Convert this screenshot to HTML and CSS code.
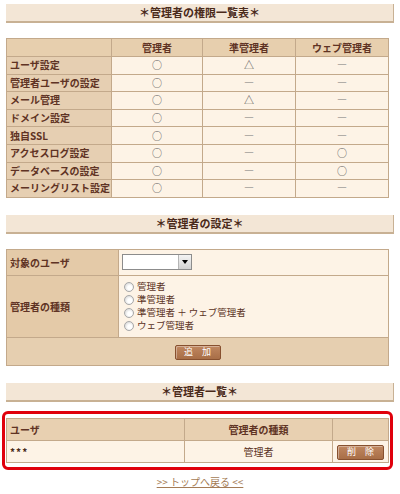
FILE: index.html
```html
<!DOCTYPE html>
<html lang="ja">
<head>
<meta charset="utf-8">
<title>管理者の権限</title>
<link rel="stylesheet" href="styles.css">
</head>
<body>
<div class="page">
  <h2 class="bar">＊管理者の権限一覧表＊</h2>
  <table class="grid perm">
    <colgroup><col class="c1"><col class="c2"><col class="c3"><col class="c4"></colgroup>
    <tr class="head"><th></th><th>管理者</th><th>準管理者</th><th>ウェブ管理者</th></tr>
    <tr><th class="label">ユーザ設定</th><td>○</td><td>△</td><td class="dash">―</td></tr>
    <tr><th class="label">管理者ユーザの設定</th><td>○</td><td class="dash">―</td><td class="dash">―</td></tr>
    <tr><th class="label">メール管理</th><td>○</td><td>△</td><td class="dash">―</td></tr>
    <tr><th class="label">ドメイン設定</th><td>○</td><td class="dash">―</td><td class="dash">―</td></tr>
    <tr><th class="label">独自SSL</th><td>○</td><td class="dash">―</td><td class="dash">―</td></tr>
    <tr><th class="label">アクセスログ設定</th><td>○</td><td class="dash">―</td><td>○</td></tr>
    <tr><th class="label">データベースの設定</th><td>○</td><td class="dash">―</td><td>○</td></tr>
    <tr><th class="label">メーリングリスト設定</th><td>○</td><td class="dash">―</td><td class="dash">―</td></tr>
  </table>

  <h2 class="bar">＊管理者の設定＊</h2>
  <table class="grid form">
    <colgroup><col class="f1"><col class="f2"></colgroup>
    <tr class="r-user">
      <th class="label">対象のユーザ</th>
      <td><div class="select"><span class="select-value"></span><span class="select-arrow"></span></div></td>
    </tr>
    <tr class="r-kind">
      <th class="label">管理者の種類</th>
      <td>
        <ul class="radios">
          <li><span class="radio"></span>管理者</li>
          <li><span class="radio"></span>準管理者</li>
          <li><span class="radio"></span>準管理者 ＋ ウェブ管理者</li>
          <li><span class="radio"></span>ウェブ管理者</li>
        </ul>
      </td>
    </tr>
    <tr class="r-btn"><td colspan="2"><button class="btn add" type="button">追　加</button></td></tr>
  </table>

  <h2 class="bar">＊管理者一覧＊</h2>
  <div class="highlight">
    <table class="grid list">
      <colgroup><col class="l1"><col class="l2"><col class="l3"></colgroup>
      <tr class="head"><th class="left">ユーザ</th><th>管理者の種類</th><th></th></tr>
      <tr><td class="left strong">***</td><td class="kind">管理者</td><td><button class="btn del" type="button">削　除</button></td></tr>
    </table>
  </div>

  <p class="back"><a href="#">&gt;&gt; トップへ戻る &lt;&lt;</a></p>
</div>
</body>
</html>
```

FILE: styles.css
```css
html, body {
  margin: 0;
  padding: 0;
  background: #ffffff;
}

body {
  font-family: "Noto Sans CJK JP", "DejaVu Sans", sans-serif;
  color: #5a3224;
}

.page {
  padding: 4px 0 0 6px;
}

.bar {
  margin: 0;
  width: 388px;
  height: 19px;
  box-sizing: border-box;
  background: #f3e6d6;
  border-bottom: 2px solid #c8b194;
  border-right: 1px solid #c8b194;
  font-size: 11px;
  line-height: 17px;
  font-weight: bold;
  color: #4a2a1a;
  text-align: center;
}

.grid {
  border-collapse: collapse;
  width: 382px;
  table-layout: fixed;
  font-size: 10px;
}

.grid th,
.grid td {
  border: 1px solid #c3a98b;
  padding: 0;
}

.grid th {
  font-weight: bold;
  color: #5f3324;
}

/* permission table */
.perm {
  margin: 15px 0 17px;
}

.perm .c1 { width: 105px; }
.perm .c2 { width: 91px; }
.perm .c3 { width: 93px; }
.perm .c4 { width: 93px; }

.perm tr.head th {
  height: 17px;
  background: #e7cfae;
  text-align: center;
}

.perm tr th.label {
  background: #e6cfb2;
  text-align: left;
  padding-left: 3px;
  height: 16.6px;
  line-height: 16px;
}

.perm td {
  background: #fdf3e6;
  text-align: center;
  color: #555;
  font-size: 10px;
  line-height: 16px;
}

.perm td.dash {
  color: #777;
  font-weight: bold;
}

/* form table */
.form {
  margin: 15px 0 17px;
}

.form .f1 { width: 112px; }
.form .f2 { width: 270px; }

.form th.label {
  background: #e4caa8;
  text-align: left;
  padding-left: 3px;
}

.form td {
  background: #fdf3e6;
}

.form .r-user th,
.form .r-user td {
  height: 25px;
}

.form .r-user td {
  padding-left: 3px;
}

.select {
  display: flex;
  width: 70px;
  height: 16px;
  box-sizing: border-box;
  border: 1px solid #8c8c8c;
  background: #fff;
}

.select-value {
  flex: 1;
}

.select-arrow {
  width: 13px;
  box-sizing: border-box;
  border-left: 1px solid #b5b5b5;
  background: linear-gradient(#f4f4f4, #d2d2d2);
  display: flex;
  align-items: center;
  justify-content: center;
}

.select-arrow::after {
  content: "";
  border-left: 3px solid transparent;
  border-right: 3px solid transparent;
  border-top: 4px solid #000;
}

.form .r-kind th,
.form .r-kind td {
  height: 61px;
}

.radios {
  list-style: none;
  margin: 0;
  padding: 2px 0 2px 5px;
  font-size: 9.5px;
  line-height: 13px;
  color: #5a3224;
}

.radios li {
  display: flex;
  align-items: center;
  height: 13px;
}

.radio {
  width: 10px;
  height: 10px;
  box-sizing: border-box;
  border-radius: 50%;
  border: 1px solid #a8a8a8;
  background: radial-gradient(circle at 60% 60%, #ffffff 0 30%, #d9d9d9 80%);
  margin-right: 3px;
  flex: none;
}

.form .r-btn td {
  height: 27px;
  background: #e6cfb0;
  text-align: center;
}

.btn {
  font-family: "Noto Sans CJK JP", sans-serif;
  font-size: 9px;
  line-height: 12px;
  color: #fff;
  background: linear-gradient(#c08760, #a86e47);
  border: 1px solid #87502f;
  border-radius: 2px;
  padding: 0;
  height: 15px;
  box-shadow: inset 1px 1px 0 rgba(255, 255, 255, 0.35);
}

.btn.add {
  width: 46px;
}

.btn.del {
  width: 47px;
}

/* list */
.highlight {
  margin: 9px 0 0 -4px;
  width: 391px;
  box-sizing: border-box;
  border: 3px solid #e0000c;
  border-radius: 6px;
  padding: 4px 2px 4px 1px;
}

.list .l1 { width: 178px; }
.list .l2 { width: 148px; }
.list .l3 { width: 56px; }

.list tr.head th {
  height: 21px;
  background: #e8d0b1;
  text-align: center;
}

.list tr.head th.left,
.list td.left {
  text-align: left;
  padding-left: 3px;
}

.list td {
  height: 21px;
  background: #fdf3e6;
  text-align: center;
}

.list td.strong {
  font-weight: bold;
  color: #4a2a1a;
  letter-spacing: 1px;
}

.list td.kind {
  color: #5a3224;
}

.back {
  margin: 4px 0 0;
  width: 388px;
  text-align: center;
  font-size: 10px;
}

.back a {
  color: #a47b55;
  text-decoration: underline;
}
```
